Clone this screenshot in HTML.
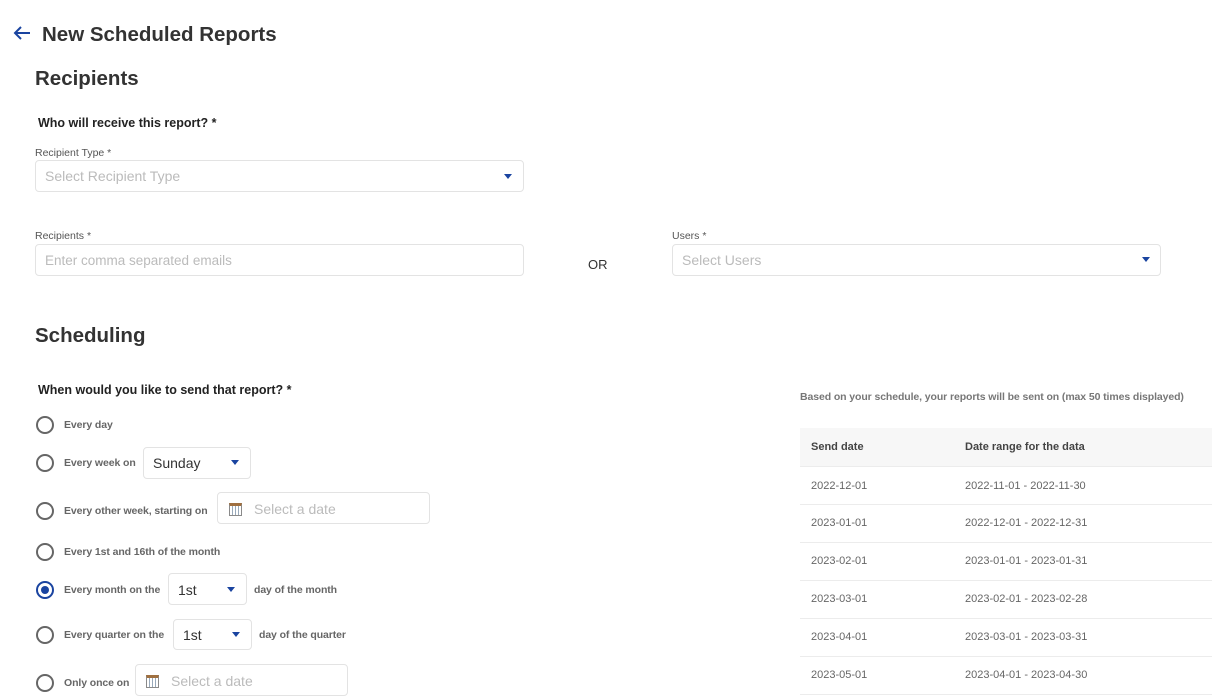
<!DOCTYPE html>
<html><head><meta charset="utf-8"><style>
*{box-sizing:border-box;margin:0;padding:0}
body{width:1212px;height:697px;overflow:hidden;background:#fff;font-family:"Liberation Sans",sans-serif;color:#333;position:relative}
.a{position:absolute;white-space:nowrap}
.h1{font-size:20.5px;font-weight:bold;color:#333}
.h2{font-size:20.5px;font-weight:bold;color:#333}
.q{font-size:12.5px;font-weight:bold;color:#222}
.lbl{font-size:10.5px;color:#555}
.box{position:absolute;border:1px solid #e3e3e3;border-radius:4px;background:#fff}
.ph{position:absolute;font-size:14px;color:#bbb;white-space:nowrap}
.caret{position:absolute;width:0;height:0;border-left:4px solid transparent;border-right:4px solid transparent;border-top:5px solid #1a44a0}
.rad{position:absolute;width:18px;height:18px;border:2px solid #666;border-radius:50%}
.rad.on{border-color:#1a44a0}
.rad.on:after{content:"";position:absolute;left:3px;top:3px;width:8px;height:8px;border-radius:50%;background:#1a44a0}
.rt{font-size:10.5px;font-weight:bold;color:#666;letter-spacing:-0.1px}
.val{position:absolute;font-size:14px;color:#333}
.cal{position:absolute;width:13px;height:13px;border:1px solid #8a8a8a;border-top:3px solid #a07040;background:repeating-linear-gradient(90deg,#fff 0 2px,#9ab 2px 3px),#fff}
.td{font-size:11px;color:#666}
.line{position:absolute;left:800px;width:412px;height:1px;background:#ececec}
</style></head><body>
<svg class="a" style="left:12px;top:25px" width="20" height="16" viewBox="0 0 20 16"><path d="M18 8H3M9 2L3 8l6 6" fill="none" stroke="#1a44a0" stroke-width="2"/></svg>
<div class="a h1" style="left:42px;top:23px">New Scheduled Reports</div>
<div class="a h2" style="left:35px;top:67px">Recipients</div>
<div class="a q" style="left:38px;top:116px">Who will receive this report? *</div>
<div class="a lbl" style="left:35px;top:147px">Recipient Type *</div>
<div class="box" style="left:35px;top:160px;width:489px;height:32px"></div>
<div class="ph" style="left:45px;top:168px">Select Recipient Type</div>
<div class="caret" style="left:504px;top:174px"></div>
<div class="a lbl" style="left:35px;top:230px">Recipients *</div>
<div class="box" style="left:35px;top:244px;width:489px;height:32px"></div>
<div class="ph" style="left:45px;top:253px;font-size:13.5px">Enter comma separated emails</div>
<div class="a" style="left:588px;top:257px;font-size:13px;color:#333">OR</div>
<div class="a lbl" style="left:672px;top:230px">Users *</div>
<div class="box" style="left:672px;top:244px;width:489px;height:32px"></div>
<div class="ph" style="left:682px;top:252px">Select Users</div>
<div class="caret" style="left:1142px;top:257px"></div>
<div class="a h2" style="left:35px;top:324px">Scheduling</div>
<div class="a q" style="left:38px;top:383px">When would you like to send that report? *</div>

<div class="rad" style="left:36px;top:416px"></div><div class="a rt" style="left:64px;top:419px">Every day</div>
<div class="rad" style="left:36px;top:454px"></div><div class="a rt" style="left:64px;top:457px">Every week on</div>
<div class="box" style="left:143px;top:447px;width:108px;height:32px"></div><div class="val" style="left:153px;top:455px">Sunday</div><div class="caret" style="left:231px;top:460px"></div>
<div class="rad" style="left:36px;top:502px"></div><div class="a rt" style="left:64px;top:505px">Every other week, starting on</div>
<div class="box" style="left:217px;top:492px;width:213px;height:32px"></div><div class="cal" style="left:229px;top:503px"></div><div class="ph" style="left:254px;top:501px">Select a date</div>
<div class="rad" style="left:36px;top:543px"></div><div class="a rt" style="left:64px;top:546px">Every 1st and 16th of the month</div>
<div class="rad on" style="left:36px;top:581px"></div><div class="a rt" style="left:64px;top:584px">Every month on the</div>
<div class="box" style="left:168px;top:573px;width:79px;height:32px"></div><div class="val" style="left:178px;top:582px">1st</div><div class="caret" style="left:227px;top:587px"></div>
<div class="a rt" style="left:254px;top:584px">day of the month</div>
<div class="rad" style="left:36px;top:626px"></div><div class="a rt" style="left:64px;top:629px">Every quarter on the</div>
<div class="box" style="left:173px;top:619px;width:79px;height:31px"></div><div class="val" style="left:183px;top:627px">1st</div><div class="caret" style="left:232px;top:632px"></div>
<div class="a rt" style="left:259px;top:629px">day of the quarter</div>
<div class="rad" style="left:36px;top:674px"></div><div class="a rt" style="left:64px;top:677px">Only once on</div>
<div class="box" style="left:135px;top:664px;width:213px;height:32px"></div><div class="cal" style="left:146px;top:675px"></div><div class="ph" style="left:171px;top:673px">Select a date</div>

<div class="a" style="left:800px;top:391px;font-size:10.5px;font-weight:bold;color:#777;letter-spacing:-0.1px">Based on your schedule, your reports will be sent on (max 50 times displayed)</div>
<div class="a" style="left:800px;top:428px;width:412px;height:38px;background:#f7f7f7"></div>
<div class="a" style="left:811px;top:441px;font-size:11px;font-weight:bold;color:#444">Send date</div>
<div class="a" style="left:965px;top:441px;font-size:11px;font-weight:bold;color:#444">Date range for the data</div>
<div class="line" style="top:466px"></div>
<div class="a td" style="left:811px;top:480px">2022-12-01</div><div class="a td" style="left:965px;top:480px">2022-11-01 - 2022-11-30</div>
<div class="line" style="top:504px"></div>
<div class="a td" style="left:811px;top:517px">2023-01-01</div><div class="a td" style="left:965px;top:517px">2022-12-01 - 2022-12-31</div>
<div class="line" style="top:542px"></div>
<div class="a td" style="left:811px;top:555px">2023-02-01</div><div class="a td" style="left:965px;top:555px">2023-01-01 - 2023-01-31</div>
<div class="line" style="top:580px"></div>
<div class="a td" style="left:811px;top:593px">2023-03-01</div><div class="a td" style="left:965px;top:593px">2023-02-01 - 2023-02-28</div>
<div class="line" style="top:618px"></div>
<div class="a td" style="left:811px;top:631px">2023-04-01</div><div class="a td" style="left:965px;top:631px">2023-03-01 - 2023-03-31</div>
<div class="line" style="top:656px"></div>
<div class="a td" style="left:811px;top:669px">2023-05-01</div><div class="a td" style="left:965px;top:669px">2023-04-01 - 2023-04-30</div>
<div class="line" style="top:694px"></div>
</body></html>
